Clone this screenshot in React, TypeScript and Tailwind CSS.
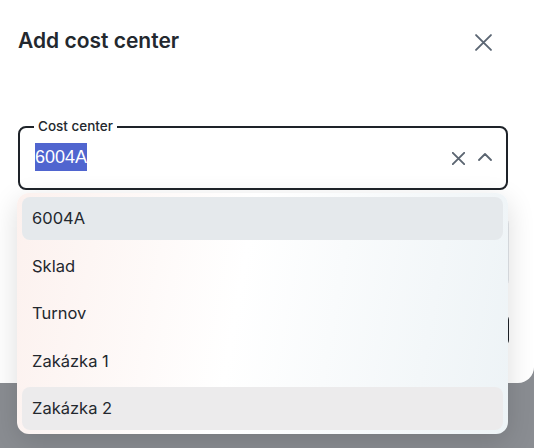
const items = ["6004A", "Sklad", "Turnov", "Zakázka 1", "Zakázka 2"];

function Cross({ size, className }: { size: number; className?: string }) {
  return (
    <svg width={size} height={size} viewBox="0 0 16 16" className={className} fill="none" stroke="currentColor" strokeWidth={16 / size * 1.9} strokeLinecap="round">
      <path d="M1 1L15 15M15 1L1 15" />
    </svg>
  );
}

export default function App() {
  return (
    <div className="relative w-[534px] h-[448px] overflow-hidden bg-[#8a8d92] font-['Inter',sans-serif] text-[#23282e]">
      {/* dialog */}
      <div className="ml-[-16px] mt-[-16px] w-[550px] h-[399px] bg-white rounded-b-2xl pl-[34px] pr-[25px] pt-[44px]">
        <div className="flex items-center justify-between h-[26px]">
          <h2 className="text-[21px] font-semibold">Add cost center</h2>
          <Cross size={17} className="text-[#5b6673] mr-[17px] mt-[2px]" />
        </div>

        <div className="relative mt-[72px] h-[64px] mr-[1px] border-2 border-[#1e2329] rounded-lg pl-[15px] pr-[14px] flex items-center">
          <span className="absolute left-[14px] top-[-11px] px-[4px] bg-white text-[13.5px] font-medium leading-[18px]">Cost center</span>
          <span className="font-['Liberation_Sans',sans-serif] text-[18px] leading-[28px] bg-[#5065cf] text-white mt-[-2px]">6004A</span>
          <div className="ml-auto flex items-center gap-[13px] text-[#5b6571]">
            <Cross size={13} />
            <svg width="14" height="8" viewBox="0 0 14 8" fill="none" stroke="currentColor" strokeWidth={1.8} strokeLinecap="round" strokeLinejoin="round" className="mt-[-2px]">
              <path d="M1 7L7 1L13 7" />
            </svg>
          </div>
        </div>

        <div className="mt-[26px] h-[72px] border border-[#e3e6ea] rounded-lg" />
        <div className="mt-[26px] flex justify-end">
          <button className="h-[32px] px-5 rounded-md bg-[#1e2329] text-white text-sm">Save</button>
        </div>
      </div>

      {/* dropdown */}
      <ul className="absolute left-[17px] top-[193px] w-[491px] h-[241px] rounded-xl p-[4px] pl-[5px] pr-[5px] flex flex-col gap-[4px] shadow-[0_8px_28px_rgba(0,0,0,0.14)] bg-[linear-gradient(100deg,#fcf1ee_0%,#ffffff_45%,#edf3f6_100%)]">
        {items.map((it, i) => (
          <li
            key={it}
            className={`h-[43.5px] flex items-center pl-[10px] rounded-lg text-[16.5px] ${
              i === 0 ? "bg-[#e5e9ec]" : i === 4 ? "bg-[#ecebec]" : ""
            }`}
          >
            {it}
          </li>
        ))}
      </ul>
    </div>
  );
}
